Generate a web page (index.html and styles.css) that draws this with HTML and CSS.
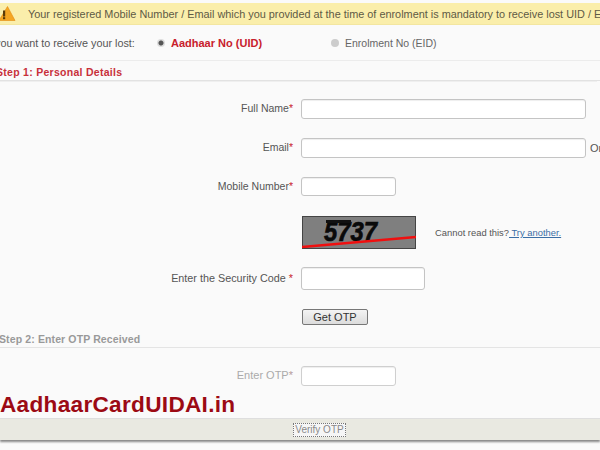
FILE: index.html
```html
<!DOCTYPE html>
<html lang="en">
<head>
<meta charset="utf-8">
<title>Retrieve lost UID / EID</title>
<link rel="stylesheet" href="styles.css">
</head>
<body>
<div class="page">
  <div class="notice">
    <svg class="warn" width="16" height="16" viewBox="0 0 16 16"><path d="M7.5 0.5 L15 14.5 L-1 14.5 Z" fill="#f5a623" stroke="#e08a10" stroke-width="0.6"/><rect x="3" y="4.5" width="2.2" height="6" fill="#5a3a08"/><rect x="3" y="11.2" width="2.2" height="2" fill="#5a3a08"/></svg>
    <span class="notice-text">Your registered Mobile Number / Email which you provided at the time of enrolment is mandatory to receive lost UID / EID</span>
  </div>
  <div class="choice">
    <span class="choice-q">you want to receive your lost:</span>
    <span class="radio radio-on"></span>
    <span class="choice-on">Aadhaar No (UID)</span>
    <span class="radio radio-off"></span>
    <span class="choice-off">Enrolment No (EID)</span>
  </div>
  <div class="step step-one">Step 1: Personal Details</div>
  <div class="row row-name">
    <label class="label">Full Name<i>*</i></label>
    <input class="field field-l" type="text">
  </div>
  <div class="row row-email">
    <label class="label">Email<i>*</i></label>
    <input class="field field-l" type="text"><span class="or">Or</span>
  </div>
  <div class="row row-mobile">
    <label class="label">Mobile Number<i>*</i></label>
    <input class="field field-s" type="text">
  </div>
  <div class="row row-captcha">
    <span class="label"></span>
    <svg class="captcha" width="114" height="33" viewBox="0 0 114 33">
      <rect width="114" height="33" fill="#7f7f7f"/>
      <rect x="0.5" y="0.5" width="113" height="32" fill="none" stroke="#444"/>
      <text x="22" y="25" class="captcha-text" textLength="53" lengthAdjust="spacingAndGlyphs">5737</text>
      <rect x="24" y="4" width="25" height="3" fill="#111"/>
      <path d="M0 31 L114 21" stroke="#f00f0f" stroke-width="2.4"/>
    </svg>
    <span class="cannot">Cannot read this?<a class="try" href="#"> Try another.</a></span>
  </div>
  <div class="row row-code">
    <label class="label label-code">Enter the Security Code <i>*</i></label>
    <input class="field field-m" type="text">
  </div>
  <div class="row row-otp-btn">
    <span class="label"></span>
    <button class="otp-btn" type="button">Get OTP</button>
  </div>
  <div class="step step-two">Step 2: Enter OTP Received</div>
  <div class="row row-enter">
    <label class="label label-dim">Enter OTP<i>*</i></label>
    <input class="field field-s field-dim" type="text">
  </div>
  <div class="brand">AadhaarCardUIDAI.in</div>
  <div class="footer"><span class="verify">Verify OTP</span></div>
</div>
</body>
</html>
```
FILE: styles.css
```css
html, body { margin: 0; padding: 0; }
body { background: #fff; font-family: "Liberation Sans", Arial, sans-serif; }
.page { width: 600px; height: 450px; overflow: hidden; background: #fafafa; padding-top: 3px; box-sizing: border-box; }
.notice { height: 22px; background: #faeeab; display: flex; align-items: center; color: #5e5a45; font-size: 10.88px; white-space: nowrap; border-bottom: 1px solid #f3e6a0; box-sizing: border-box; }
.warn { flex: none; }
.notice-text { margin-left: 12px; }
.choice { height: 35px; display: flex; align-items: center; font-size: 10.8px; color: #555; white-space: nowrap; box-sizing: border-box; padding-top: 1px; }
.choice-q { margin-left: -5px; width: 157px; flex: none; }
.radio { width: 8px; height: 8px; border-radius: 50%; flex: none; box-sizing: border-box; }
.radio-on { margin-left: 5px; background: radial-gradient(circle, #555 0 2px, #ddd 3px); }
.radio-off { margin-left: 68px; background: #ccc; }
.choice-on { margin-left: 6px; font-weight: bold; color: #c8202c; font-size: 11px; width: 92px; flex: none; }
.choice-off { margin-left: 6px; color: #666; font-size: 10.5px; }
.step { font-weight: bold; font-size: 10.5px; white-space: nowrap; box-sizing: border-box; }
.step-one { height: 21px; margin-left: -4px; width: 604px; line-height: 22px; letter-spacing: 0.28px; color: #c8303a; border-top: 1px solid #ececec; border-bottom: 1px solid #e2e2e2; box-shadow: 0 4px 0 -3px #efefef; }
.step-two { height: 15px; line-height: 13px; color: #999; margin-left: -1px; width: 601px; margin-top: 8px; letter-spacing: 0.12px; border-bottom: 1px solid #e4e4e4; }
.row { display: flex; align-items: center; }
.label { width: 293px; flex: none; box-sizing: border-box; padding-bottom: 2px; text-align: right; font-size: 10.5px; color: #555; white-space: nowrap; }
.label i { font-style: normal; color: #c8202c; }
.label-code { font-size: 10.8px; }
.label-dim { color: #aaa; font-size: 11px; }
.label-dim i { color: #b59a9a; }
.field { display: block; height: 100%; flex: none; box-sizing: border-box; margin: 0 0 0 8px; padding: 0; background: #fff; border: 1px solid #c4c4c4; border-radius: 3px; box-shadow: inset 0 1px 1px #eee; }
.field-l { width: 285px; }
.field-s { width: 95px; }
.field-m { width: 124px; }
.field-dim { border-color: #cfcfcf; }
.or { margin-left: 4px; font-size: 11px; color: #555; }
.row-name { height: 20px; margin-top: 18px; }
.row-email { height: 20px; margin-top: 19px; }
.row-mobile { height: 19px; margin-top: 19px; }
.row-captcha { height: 33px; margin-top: 20px; }
.row-code { height: 23px; margin-top: 18px; }
.row-otp-btn { height: 16px; margin-top: 19px; }
.row-enter { height: 20px; margin-top: 18px; }
.captcha { display: block; margin-left: 9px; flex: none; }
.captcha-text { font-family: "Liberation Sans", sans-serif; font-weight: bold; font-style: italic; font-size: 27px; fill: #0a0a0a; stroke: #0a0a0a; stroke-width: 0.7px; }
.cannot { margin-left: 19px; font-size: 9.4px; color: #555; white-space: nowrap; }
.try { color: #3b6ea5; text-decoration: underline; }
.otp-btn { display: block; margin: 0 0 0 9px; padding: 0; width: 66px; height: 16px; font: 11px "Liberation Sans", sans-serif; color: #333; background: linear-gradient(#f4f4f4, #dcdcdc); border: 1px solid #777; border-radius: 2px; box-sizing: border-box; line-height: 14px; }
.brand { height: 26px; margin-top: 6px; font-size: 22.6px; font-weight: bold; color: #9c0a14; line-height: 26px; white-space: nowrap; letter-spacing: 0.3px; }
.footer { height: 22px; background: #e9e9e1; border-top: 1px solid #dedede; box-sizing: border-box; box-shadow: 0 2px 2px #888; display: flex; align-items: center; justify-content: center; }
.verify { margin-left: 39px; font-size: 10px; color: #8a8a8a; background: #f6f6f6; border: 1px dotted #777; padding: 0 1px; line-height: 12px; }
```
